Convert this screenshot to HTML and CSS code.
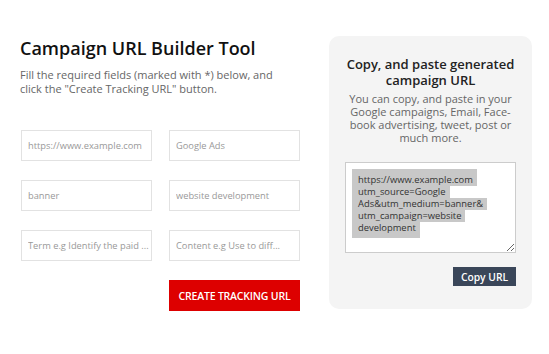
FILE: index.html
```html
<!DOCTYPE html>
<html lang="en">
<head>
    <meta charset="UTF-8">
    <meta name="viewport" content="width=device-width, initial-scale=1.0">
    <title>Campaign URL Builder Tool</title>
    <link rel="stylesheet" href="styles.css">
</head>
<body>
    <div class="builder">
        <div class="builder-form">
            <h1>Campaign URL Builder Tool</h1>
            <p class="intro">Fill the required fields (marked with *) below, and click the "Create Tracking URL" button.</p>
            <form class="fields">
                <input type="text" placeholder="https://www.example.com">
                <input type="text" placeholder="Google Ads">
                <input type="text" placeholder="banner">
                <input type="text" placeholder="website development">
                <input type="text" placeholder="Term e.g Identify the paid ...">
                <input type="text" placeholder="Content e.g Use to diff...">
                <button type="button" class="create">CREATE TRACKING URL</button>
            </form>
        </div>
        <div class="result">
            <h2>Copy, and paste generated campaign URL</h2>
            <p>You can copy, and paste in your Google campaigns, Email, Face-book advertising, tweet, post or much more.</p>
            <div class="output">
                <span class="sel first">https://www.example.com</span>
                <span class="sel">utm_source=Google</span>
                <span class="sel">Ads&amp;utm_medium=banner&amp;</span>
                <span class="sel">utm_campaign=website</span>
                <span class="sel last">development</span>
            </div>
            <div class="copy-row">
                <button type="button" class="copy">Copy URL</button>
            </div>
        </div>
    </div>
</body>
</html>
```

FILE: styles.css
```css
body {
    font-family: "Open Sans", sans-serif;
    color: #222;
    background: #fff;
    margin: 0;
    padding: 36px 17px 0 20px;
}
.builder {
    display: flex;
    align-items: flex-start;
    gap: 29px;
}
.builder-form {
    width: 280px;
}
h1 {
    font-size: 18px;
    font-weight: 600;
    line-height: 24px;
    margin: 0 0 8px;
    color: #111;
}
.intro {
    max-width: 268px;
    font-size: 11px;
    line-height: 14px;
    color: #666;
    margin: 0 0 34px;
}
.fields {
    display: grid;
    grid-template-columns: 131px 131px;
    column-gap: 17px;
    row-gap: 19px;
    padding-left: 1px;
}
.fields input {
    height: 31px;
    box-sizing: border-box;
    border: 1px solid #e2e2e2;
    padding: 0 1px 0 6px;
    font-family: "Open Sans", sans-serif;
    font-size: 9.3px;
    color: #333;
    outline: none;
    text-overflow: clip;
}
.fields input::placeholder {
    color: #999;
}
.create {
    grid-column: 2;
    height: 31px;
    border: none;
    padding: 0;
    background-color: #dd0000;
    color: white;
    font-family: "Open Sans", sans-serif;
    font-size: 10.5px;
    font-weight: 600;
    letter-spacing: -0.2px;
    cursor: pointer;
}
.result {
    width: 203px;
    box-sizing: border-box;
    background-color: #f4f4f4;
    border-radius: 10px;
    padding: 20px 16px 23px;
    text-align: center;
}
.result h2 {
    font-size: 13px;
    font-weight: 600;
    line-height: 16px;
    margin: 0 0 4px;
    color: #222;
}
.result p {
    font-size: 11px;
    line-height: 13px;
    color: #666;
    margin: 0 0 18px;
}
.output {
    height: 91px;
    box-sizing: border-box;
    border: 1px solid #ccc;
    background: #fff;
    padding: 6px;
    text-align: left;
    resize: vertical;
    overflow: auto;
    font-size: 9.4px;
    line-height: 12px;
    color: #333;
}
.sel {
    display: block;
    width: fit-content;
    padding: 0 4px 0 6px;
    background-color: #c8c8c8;
}
.sel.first {
    padding-top: 5px;
}
.sel.last {
    padding-bottom: 4px;
}
.copy-row {
    display: flex;
    justify-content: flex-end;
    margin-top: 14px;
}
.copy {
    width: 63px;
    height: 19px;
    border: none;
    padding: 0;
    background-color: #3a4659;
    color: white;
    font-family: "Open Sans", sans-serif;
    font-size: 10.3px;
    font-weight: 600;
    cursor: pointer;
}
```
